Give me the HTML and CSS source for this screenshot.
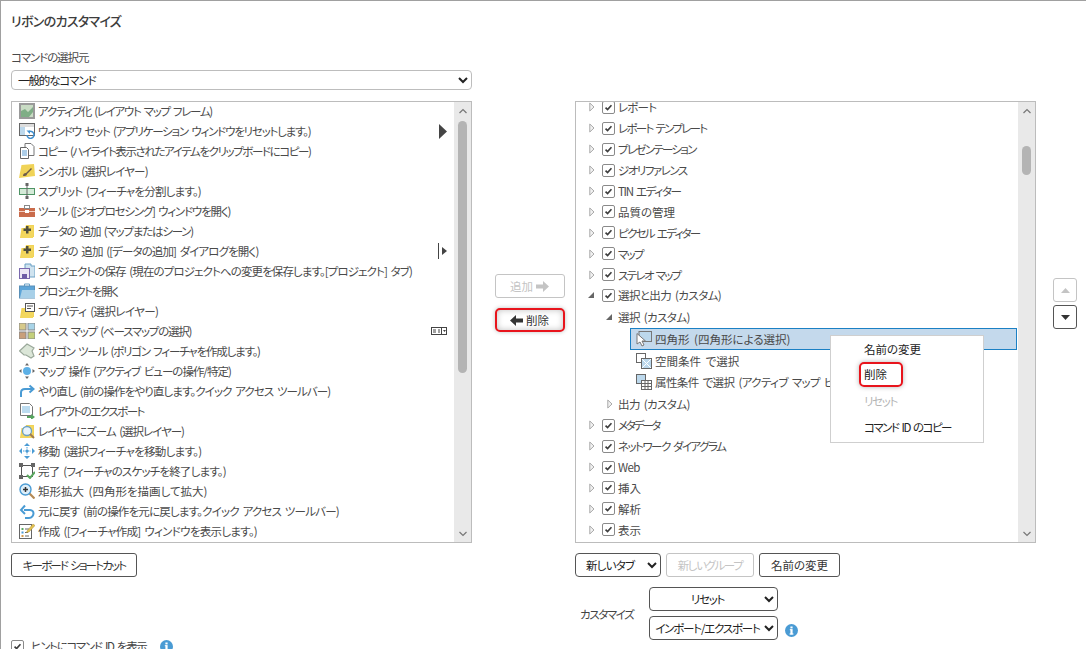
FILE: index.html
```html
<!DOCTYPE html>
<html lang="ja">
<head>
<meta charset="utf-8">
<title>リボンのカスタマイズ</title>
<link rel="stylesheet" href="styles.css">
</head>
<body>
<svg class="defs" width="0" height="0">
  <symbol id="chk" viewBox="0 0 13 13"><path d="M3 6.6 5.4 9 10 3.9" fill="none" stroke="#3c3c3c" stroke-width="1.9"/></symbol>
  <symbol id="tri-o" viewBox="0 0 6 10"><path d="M.8 1 5 5 .8 9Z" fill="#f2f2f2" stroke="#a8a8a8"/></symbol>
  <symbol id="tri-f" viewBox="0 0 8 8"><path d="M7 1v6H1Z" fill="#666"/></symbol>
  <symbol id="up" viewBox="0 0 10 6"><path d="M1.5 5 5 1.5 8.5 5" fill="none" stroke="#777" stroke-width="1.2"/></symbol>
  <symbol id="down" viewBox="0 0 10 6"><path d="M1.5 1 5 4.5 8.5 1" fill="none" stroke="#777" stroke-width="1.2"/></symbol>
  <symbol id="folder" viewBox="0 0 16 16"><path d="M1 15 2.500 5H6l1-3h8v12Z" fill="#f0d357"/><path d="M8 3h6v12H1.500l-.5 0Z" fill="#f3d75f"/></symbol>
  <symbol id="info" viewBox="0 0 13 13"><circle cx="6.500" cy="6.500" r="6.500" fill="#4a9bd4"/><rect x="5.400" y="5.400" width="2.200" height="5" fill="#fff"/><rect x="4.600" y="9.400" width="3.800" height="1.200" fill="#fff"/><rect x="4.800" y="5.200" width="2.600" height="1" fill="#fff"/><rect x="5.400" y="2.500" width="2.200" height="1.900" fill="#fff"/></symbol>
  <symbol id="select-tool" viewBox="0 0 16 16"><rect x="3" y=".5" width="12.500" height="10" fill="#bcd8ec" stroke="#777"/><path d="M1 2.500 1 13l3-2 2 4 2-1-2-4h3.500Z" fill="#fff" stroke="#777"/></symbol>
  <symbol id="add-data" viewBox="0 0 16 16"><use href="#folder"/><path d="M7 3h2.500v2.500H12V8H9.500v2.500H7V8H4.500V5.500H7Z" fill="#4f4f40"/></symbol>
</svg>

<main class="page">
  <h1 class="title">リボンのカスタマイズ</h1>
  <div class="columns">
    <section class="col">
      <label class="source-label" for="source">コマンドの選択元</label>
      <select id="source" class="select source-select"><option>一般的なコマンド</option></select>
      <div class="panel">
        <ul class="commands">
          <li class="ls13"><svg class="ico" viewBox="0 0 16 16"><rect width="16" height="16" fill="#9a9a9a"/><rect x="2" y="2" width="12" height="12" fill="#c9dcc4"/><path d="M2 14V8l4-2 3 3 5-5v5l-4 5Z" fill="#7fae86"/></svg>アクティブ化 (レイアウト マップ フレーム)</li>
          <li class="ls12"><svg class="ico" viewBox="0 0 16 16"><rect x=".5" y=".5" width="15" height="12" fill="#fff" stroke="#666"/><path d="M1 1h14v3H1Z" fill="#ddd"/><rect x="1" y="4" width="5" height="8" fill="#bcd8ec"/><path d="M8 12a3.500 3.500 0 1 0 1.500-3" fill="none" stroke="#3f8fd0" stroke-width="1.500"/><path d="M7.500 7.500h3.500v3.500Z" fill="#3f8fd0"/></svg>ウィンドウ セット (アプリケーション ウィンドウをリセットします。)<svg class="fly fly-big" viewBox="0 0 8 15"><path d="M0 0 8 7.500 0 15Z" fill="#444"/></svg></li>
          <li class="ls14"><svg class="ico" viewBox="0 0 16 16"><path d="M6 .5h6l3 3v9H6Z" fill="#fff" stroke="#777"/><path d="M1.500 4.500h6l2 2v9h-8Z" fill="#fff" stroke="#666"/><path d="M3 8h5M3 10h5M3 12h5" stroke="#5a9bd0"/></svg>コピー (ハイライト表示されたアイテムをクリップボードにコピー)</li>
          <li class="ls8"><svg class="ico" viewBox="0 0 16 16"><path d="M0 15 2.500 2 15 1l1 12-8 1Z" fill="#f0d357"/><path d="M4 13c0-2 1-3 3-3l5-5 1 1-5 5c0 2-2 2-4 2Z" fill="#6b5a4a"/></svg>シンボル (選択レイヤー)</li>
          <li class="ls8"><svg class="ico" viewBox="0 0 16 16"><rect x=".5" y="5.500" width="15" height="6" fill="#d5ead8" stroke="#4f9465"/><path d="M8 1v15" stroke="#666"/><rect x="6.500" y="0" width="3" height="3" fill="#666"/><rect x="6.500" y="13" width="3" height="3" fill="#666"/></svg>スプリット (フィーチャを分割します。)</li>
          <li class="ls12"><svg class="ico" viewBox="0 0 16 16"><rect y="5" width="16" height="9" fill="#c96b4b"/><rect x="5.500" y="2.500" width="5" height="3" fill="none" stroke="#888"/><path d="M0 8.500h16" stroke="#f3d0c4"/><rect x="6" y="7" width="4" height="3" fill="#fff"/></svg>ツール ([ジオプロセシング] ウィンドウを開く)</li>
          <li class="ls12"><svg class="ico"><use href="#add-data"/></svg>データの 追加 (マップまたはシーン)</li>
          <li class="ls9"><svg class="ico"><use href="#add-data"/></svg>データの 追加 ([データの追加] ダイアログを開く)<svg class="fly fly-split" viewBox="0 0 9 16"><path d="M.5 0v16" stroke="#444"/><path d="M4 4 9 8 4 12Z" fill="#444"/></svg></li>
          <li class="ls9"><svg class="ico" viewBox="0 0 16 16"><path d="M6 1h6v2h4v11H6Z" fill="#cfe3ef" stroke="#6aa0c4"/><rect x=".5" y="5.500" width="10" height="10" fill="#ece8f5" stroke="#7a69ae"/><rect x="3" y="11" width="5" height="4.500" fill="#6e5ca6"/></svg>プロジェクトの保存 (現在のプロジェクトへの変更を保存します。[プロジェクト] タブ)</li>
          <li class="ls13"><svg class="ico" viewBox="0 0 16 16"><path d="M5.500 3V1h5v2" fill="none" stroke="#6aa0c4"/><rect x=".5" y="3" width="15" height="12" fill="#5da5d8" stroke="#5a90b8"/><path d="M1 15 3 7h13v8Z" fill="#a8d0e8"/></svg>プロジェクトを開く</li>
          <li class="ls6"><svg class="ico" viewBox="0 0 16 16"><use href="#folder"/><rect x="6.500" y=".5" width="9" height="8" fill="#fff" stroke="#555"/><path d="M8 3h6M8 5.500h4" stroke="#555"/></svg>プロパティ (選択レイヤー)</li>
          <li class="ls12"><svg class="ico" viewBox="0 0 16 16"><rect width="7" height="7" fill="#d6c98a" stroke="#888"/><rect x="9" width="7" height="7" fill="#a8d4e8" stroke="#888"/><rect y="9" width="7" height="7" fill="#c99f7a" stroke="#888"/><rect x="9" y="9" width="7" height="7" fill="#c4cf7a" stroke="#888"/></svg>ベース マップ (ベースマップの選択)<svg class="fly fly-gallery" viewBox="0 0 16 8"><rect x=".5" y=".5" width="15" height="7" fill="#fff" stroke="#444"/><path d="M2 3h3M2 5h3M7 3h2M7 5h2M10.500 1v6" stroke="#444"/><path d="M12 3h3l-1.500 2Z" fill="#444"/></svg></li>
          <li class="ls12"><svg class="ico" viewBox="0 0 16 16"><path d="M.5 8 8 1l7 4-2 3 2 5-3 2-5-3-2 0Z" fill="#dbe6d8" stroke="#9aa89a" stroke-width="1.200"/></svg>ポリゴン ツール (ポリゴン フィーチャを作成します。)</li>
          <li class="ls10"><svg class="ico" viewBox="0 0 16 16"><circle cx="8" cy="8" r="4" fill="#5db0e6"/><path d="M8 0 10 2.500H6ZM8 16 6 13.500h4ZM0 8l2.500-2v4ZM16 8l-2.500 2V6Z" fill="#666"/></svg>マップ 操作 (アクティブ ビューの操作/特定)</li>
          <li class="ls9"><svg class="ico" viewBox="0 0 16 16"><path d="M2 14V9.500C2 7 4 6 6 6h7" fill="none" stroke="#4a9bd4" stroke-width="2"/><path d="M10.500 2.500 14.500 6 10.500 9.500" fill="none" stroke="#4a9bd4" stroke-width="2"/></svg>やり直し (前の操作をやり直します。クイック アクセス ツールバー)</li>
          <li class="ls15"><svg class="ico" viewBox="0 0 16 16"><path d="M1.500.5h9l3 3v9h-12Z" fill="#fff" stroke="#777"/><rect x="3" y="3" width="8" height="7" fill="#bcdcf0"/><path d="M8 14h5" stroke="#57a45f" stroke-width="2"/><path d="M12 11l4 3-4 3Z" fill="#57a45f"/></svg>レイアウトのエクスポート</li>
          <li class="ls10"><svg class="ico" viewBox="0 0 16 16"><use href="#folder"/><circle cx="8" cy="8" r="4.500" fill="#e8f3fb" stroke="#6aa0c4" stroke-width="1.300"/><path d="M11 11 15 15" stroke="#a07c50" stroke-width="2"/></svg>レイヤーにズーム (選択レイヤー)</li>
          <li class="ls7"><svg class="ico" viewBox="0 0 16 16"><path d="M8 0 11 3H5ZM8 16 5 13h6ZM0 8l3-3v6ZM16 8l-3 3V5Z" fill="#4a9bd4"/><circle cx="8" cy="8" r="1.500" fill="#4a9bd4"/><path d="M8 4v8M4 8h8" stroke="#4a9bd4" stroke-dasharray="1.500 1"/></svg>移動 (選択フィーチャを移動します。)</li>
          <li class="ls8"><svg class="ico" viewBox="0 0 16 16"><rect x="2.500" y="2.500" width="11" height="11" fill="none" stroke="#555"/><path d="M0 0h4v4H0ZM12 0h4v4h-4ZM0 12h4v4H0Z" fill="#666"/><path d="M8 12 11 15 16 9" fill="none" stroke="#5aa85f" stroke-width="2"/></svg>完了 (フィーチャのスケッチを終了します。)</li>
          <li><svg class="ico" viewBox="0 0 16 16"><path d="M10 10 15.500 15.500" stroke="#b58a55" stroke-width="2.200"/><circle cx="6.500" cy="6.500" r="5.500" fill="#dceefa" stroke="#4a9bd4" stroke-width="1.400"/><path d="M4 6.500h5M6.500 4v5" stroke="#333" stroke-width="1.500"/></svg>矩形拡大 (四角形を描画して拡大)</li>
          <li class="ls8"><svg class="ico" viewBox="0 0 16 16"><path d="M5 7h6c2.500 0 3.500 2 3.500 3.500S13 15 10 15H6" fill="none" stroke="#4a9bd4" stroke-width="2"/><path d="M6 2.500 2 7l4 4" fill="none" stroke="#4a9bd4" stroke-width="2"/></svg>元に戻す (前の操作を元に戻します。クイック アクセス ツールバー)</li>
          <li class="ls7"><svg class="ico" viewBox="0 0 16 16"><rect x=".5" y="1.500" width="12" height="14" fill="#fff" stroke="#666"/><path d="M2.500 5h2v2h-2Z" fill="#5aa85f"/><path d="M2.500 8.500h2v2h-2Z" fill="#4a9bd4"/><path d="M2.500 12h2v2h-2Z" fill="#d69a4a"/><path d="M6 6h4M6 9.500h3M6 13h4" stroke="#666"/><path d="M8 8 14 1l2 1.500L10 9l-2.500.5Z" fill="#e5c34f" stroke="#a58a40" stroke-width=".5"/></svg>作成 ([フィーチャ作成] ウィンドウを表示します。)</li>
        </ul>
        <div class="scrollbar">
          <svg class="sb-arrow"><use href="#up"/></svg>
          <div class="thumb thumb-left"></div>
          <svg class="sb-arrow sb-end"><use href="#down"/></svg>
        </div>
      </div>
      <div class="under">
        <button class="btn shortcut" type="button">キーボード ショートカット</button>
      </div>
      <div class="hint">
        <span class="box"><svg><use href="#chk"/></svg></span>
        <span class="hint-text">ヒントにコマンド ID を表示</span>
        <svg class="info hint-info"><use href="#info"/></svg>
      </div>
    </section>

    <section class="middle">
      <button class="btn move-btn off" type="button">追加 <svg class="arrow-ico" viewBox="0 0 13 11"><path d="M0 3.500h7V0l6 5.500L7 11V7.500H0Z" fill="#c4c4c4"/></svg></button>
      <button class="btn move-btn marked" type="button"><svg class="arrow-ico" viewBox="0 0 13 11"><path d="M13 3.500H6V0L0 5.500 6 11V7.500h7Z" fill="#333"/></svg> 削除</button>
    </section>

    <section class="col col-right">
      <div class="panel tree-panel">
        <ul class="tree">
          <li class="row ls8"><svg class="tw"><use href="#tri-o"/></svg><span class="box"><svg><use href="#chk"/></svg></span>レポート</li>
          <li class="row ls17"><svg class="tw"><use href="#tri-o"/></svg><span class="box"><svg><use href="#chk"/></svg></span>レポート テンプレート</li>
          <li class="row ls17"><svg class="tw"><use href="#tri-o"/></svg><span class="box"><svg><use href="#chk"/></svg></span>プレゼンテーション</li>
          <li class="row ls15"><svg class="tw"><use href="#tri-o"/></svg><span class="box"><svg><use href="#chk"/></svg></span>ジオリファレンス</li>
          <li class="row ls13"><svg class="tw"><use href="#tri-o"/></svg><span class="box"><svg><use href="#chk"/></svg></span>TIN エディター</li>
          <li class="row"><svg class="tw"><use href="#tri-o"/></svg><span class="box"><svg><use href="#chk"/></svg></span>品質の管理</li>
          <li class="row ls17"><svg class="tw"><use href="#tri-o"/></svg><span class="box"><svg><use href="#chk"/></svg></span>ピクセル エディター</li>
          <li class="row ls17"><svg class="tw"><use href="#tri-o"/></svg><span class="box"><svg><use href="#chk"/></svg></span>マップ</li>
          <li class="row ls17"><svg class="tw"><use href="#tri-o"/></svg><span class="box"><svg><use href="#chk"/></svg></span>ステレオ マップ</li>
          <li class="row ls6"><svg class="tw tw-open"><use href="#tri-f"/></svg><span class="box"><svg><use href="#chk"/></svg></span>選択と出力 (カスタム)</li>
          <li class="row row-sub lvl1 ls6"><svg class="tw tw-open"><use href="#tri-f"/></svg>選択 (カスタム)</li>
          <li class="row row-sub lvl2 selected"><svg class="ico"><use href="#select-tool"/></svg>四角形 (四角形による選択)</li>
          <li class="row row-sub lvl2"><svg class="ico" viewBox="0 0 16 16"><rect x=".5" y=".5" width="9" height="9" fill="#fff" stroke="#666"/><rect x="5.500" y="5.500" width="10" height="10" fill="#bcd8ec" stroke="#666"/><path d="M6 15 15 6M6 6l9 9" stroke="#fff"/></svg>空間条件 で選択</li>
          <li class="row row-sub lvl2 ls6"><svg class="ico" viewBox="0 0 16 16"><rect x=".5" y=".5" width="9" height="9" fill="#bcd8ec" stroke="#666"/><rect x="5.500" y="6.500" width="10" height="9" fill="#fff" stroke="#666"/><path d="M5.500 9.500h10M5.500 12.500h10M9 6.500v9M12 6.500v9" stroke="#666"/></svg>属性条件 で選択 (アクティブ マップ ビュー)</li>
          <li class="row row-sub lvl1 ls6"><svg class="tw"><use href="#tri-o"/></svg>出力 (カスタム)</li>
          <li class="row ls22"><svg class="tw"><use href="#tri-o"/></svg><span class="box"><svg><use href="#chk"/></svg></span>メタデータ</li>
          <li class="row ls15"><svg class="tw"><use href="#tri-o"/></svg><span class="box"><svg><use href="#chk"/></svg></span>ネットワーク ダイアグラム</li>
          <li class="row ls6"><svg class="tw"><use href="#tri-o"/></svg><span class="box"><svg><use href="#chk"/></svg></span>Web</li>
          <li class="row"><svg class="tw"><use href="#tri-o"/></svg><span class="box"><svg><use href="#chk"/></svg></span>挿入</li>
          <li class="row"><svg class="tw"><use href="#tri-o"/></svg><span class="box"><svg><use href="#chk"/></svg></span>解析</li>
          <li class="row"><svg class="tw"><use href="#tri-o"/></svg><span class="box"><svg><use href="#chk"/></svg></span>表示</li>
        </ul>
        <div class="scrollbar">
          <svg class="sb-arrow"><use href="#up"/></svg>
          <div class="thumb thumb-right"></div>
          <svg class="sb-arrow sb-end"><use href="#down"/></svg>
        </div>
        <div class="menu">
          <div class="menu-item">名前の変更</div>
          <div class="menu-item"><span class="menu-mark">削除</span></div>
          <div class="menu-item off ls13">リセット</div>
          <div class="menu-item ls15">コマンド ID のコピー</div>
        </div>
      </div>
      <div class="under tab-actions">
        <select class="select tab-select"><option>新しいタブ</option></select>
        <button class="btn group-btn off" type="button">新しいグループ</button>
        <button class="btn rename-btn" type="button">名前の変更</button>
      </div>
      <div class="customize">
        <span class="customize-label">カスタマイズ</span>
        <div class="customize-stack">
          <select class="select custom-select"><option>リセット</option></select>
          <select class="select custom-select"><option>インポート/エクスポート</option></select>
        </div>
        <svg class="info customize-info"><use href="#info"/></svg>
      </div>
    </section>

    <section class="order">
      <button class="btn order-btn off" type="button"><svg viewBox="0 0 9 5"><path d="M4.500 0 9 5H0Z" fill="#c4c4c4"/></svg></button>
      <button class="btn order-btn" type="button"><svg viewBox="0 0 9 5"><path d="M0 0h9L4.500 5Z" fill="#333"/></svg></button>
    </section>
  </div>
</main>
</body>
</html>
```
FILE: styles.css
```css
* { box-sizing: border-box; }
html, body { margin: 0; height: 100%; }
body {
  overflow: hidden;
  background: #fff;
  color: #4a4a4a;
  font: 11.5px/20px "Noto Sans CJK JP", "Liberation Sans", sans-serif;
  font-feature-settings: "palt";
  word-spacing: 2px;
}
ul { list-style: none; margin: 0; padding: 0; }
.defs { display: block; position: absolute; }

/* Tightening steps that bring the kana to the reference's narrow set width */
.ls6 { letter-spacing: -.6px; }
.ls7 { letter-spacing: -.7px; }
.ls8 { letter-spacing: -.8px; }
.ls9 { letter-spacing: -.9px; }
.ls10 { letter-spacing: -1px; }
.ls12 { letter-spacing: -1.200px; }
.ls13 { letter-spacing: -1.300px; }
.ls14 { letter-spacing: -1.400px; }
.ls15 { letter-spacing: -1.500px; }
.ls17 { letter-spacing: -1.700px; }
.ls22 { letter-spacing: -2.200px; }

.page {
  width: 1086px;
  height: 649px;
  overflow: hidden;
  border-top: 1px solid #a0a0a0;
  border-left: 1px solid #a0a0a0;
  padding-left: 10px;
}
.title {
  margin: 10px 0 0;
  font-size: 13px;
  font-weight: 500;
  line-height: 20px;
  letter-spacing: -.7px;
  color: #3c3c3c;
}
.columns { display: grid; grid-template-columns: 461px 103px 461px 50px; margin-top: 16px; }
.col { display: flex; flex-direction: column; }
.source-label { display: block; height: 23px; line-height: 20px; letter-spacing: -1.100px; }

.select {
  height: 24px;
  font: inherit;
  word-spacing: inherit;
  color: #222;
  background: #fff;
  border: 1px solid #555;
  border-radius: 4px;
}
.source-select { width: 461px; height: 20px; border-color: #bdbdbd; padding: 0 2px; line-height: 18px; letter-spacing: -1.100px; }

.panel {
  position: relative;
  display: flex;
  height: 442px;
  margin-top: 11px;
  border: 1px solid #bcbcbc;
  overflow: hidden;
}
.commands { flex: 1; min-width: 0; margin-top: -1px; }
.commands li {
  display: flex;
  align-items: center;
  height: 20px;
  padding: 0 7px;
  white-space: nowrap;
}
.ico { flex: none; width: 16px; height: 16px; margin-right: 3px; }
.fly { flex: none; margin-left: auto; }
.fly-big { width: 8px; height: 15px; }
.fly-split { width: 9px; height: 16px; }
.fly-gallery { width: 16px; height: 8px; }

.scrollbar {
  flex: none;
  display: flex;
  flex-direction: column;
  align-items: center;
  width: 17px;
  background: #e9e9e9;
}
.sb-arrow { flex: none; width: 10px; height: 6px; margin-top: 6px; }
.sb-end { margin-top: auto; margin-bottom: 5px; }
.thumb { width: 9px; background: #b4b4b4; border-radius: 5px; }
.thumb-left { height: 252px; margin-top: 7px; }
.thumb-right { height: 29px; margin-top: 32px; }

.tree { flex: 1; min-width: 0; margin-top: -5px; }
.row {
  display: flex;
  align-items: center;
  height: 20.900px;
  padding-left: 11px;
  white-space: nowrap;
}
.row-sub { height: 21.600px; }
.tw { flex: none; width: 6px; height: 10px; margin: 0 7px 0 2px; }
.tw-open { width: 8px; height: 8px; margin: 0 7px 0 0; }
.box {
  flex: none;
  display: block;
  width: 13px;
  height: 13px;
  margin-right: 3px;
  border: 1px solid #8a8a8a;
  border-radius: 2px;
  background: #fff;
}
.box svg { display: block; width: 11px; height: 11px; }
.lvl1 { padding-left: 29px; }
.lvl1 .tw { margin-right: 5px; }
.lvl1 .tw-open { margin-right: 5px; }
.lvl2 { margin-left: 54px; padding-left: 6px; }
.selected {
  height: 22.500px;
  margin-right: 1px;
  background: #c4d9ec;
  border: 1px solid #1b80c4;
  padding-left: 5px;
}

.menu {
  position: absolute;
  left: 254px;
  top: 233px;
  width: 154px;
  height: 108px;
  background: #fff;
  border: 1px solid #cfcfcf;
  color: #222;
}
.menu-item { height: 26px; line-height: 26px; padding-left: 33px; white-space: nowrap; }
.menu-item.off { color: #b5b5b5; }
.menu-mark {
  display: block;
  width: 44px;
  height: 25px;
  margin-left: -5px;
  padding-left: 3px;
  border: 2px solid #e8141c;
  border-radius: 5px;
  line-height: 21px;
  box-shadow: 0 0 5px rgba(0,0,0,.3);
}

.btn {
  display: inline-flex;
  align-items: center;
  justify-content: center;
  height: 24px;
  padding: 0;
  font: inherit;
  word-spacing: inherit;
  white-space: nowrap;
  color: #333;
  background: #fff;
  border: 1px solid #555;
  border-radius: 3px;
}
.btn.off { color: #c4c4c4; border-color: #c4c4c4; }

.under { display: flex; gap: 5px; margin-top: 10px; }
.shortcut { width: 126px; letter-spacing: -1.800px; }

.hint { display: flex; align-items: center; margin-top: 59px; }
.hint .box { margin-right: 7px; }
.hint-text { color: #444; letter-spacing: -1.300px; }
.info { flex: none; width: 13px; height: 13px; }
.hint-info { margin-left: 13px; }

.middle { display: flex; flex-direction: column; align-items: center; gap: 10px; padding: 227px 0 0 12px; }
.move-btn { width: 70px; gap: 3px; }
.arrow-ico { width: 13px; height: 11px; }
.marked {
  border: 2px solid #e8141c;
  border-radius: 5px;
  box-shadow: inset 0 0 6px rgba(0,0,0,.25), 0 0 4px rgba(0,0,0,.25);
}

.col-right { padding-top: 54px; }
.tree-panel { margin-top: 0; }
.tab-select { width: 86px; padding-left: 6px; letter-spacing: -.8px; }
.group-btn { width: 88px; letter-spacing: -1.400px; }
.rename-btn { width: 81px; }

.customize { display: flex; align-items: center; margin-top: 10px; }
.customize-label { width: 74px; padding-left: 5px; color: #444; letter-spacing: -1.400px; }
.customize-stack { display: flex; flex-direction: column; gap: 5px; }
.custom-select { display: block; width: 129px; text-align: center; text-align-last: center; letter-spacing: -1.200px; }
.customize-info { margin: 33px 0 0 7px; }

.order { display: flex; flex-direction: column; align-items: flex-start; gap: 3px; padding: 231px 0 0 17px; }
.order-btn { width: 24px; }
.order-btn svg { width: 9px; height: 5px; }
```
